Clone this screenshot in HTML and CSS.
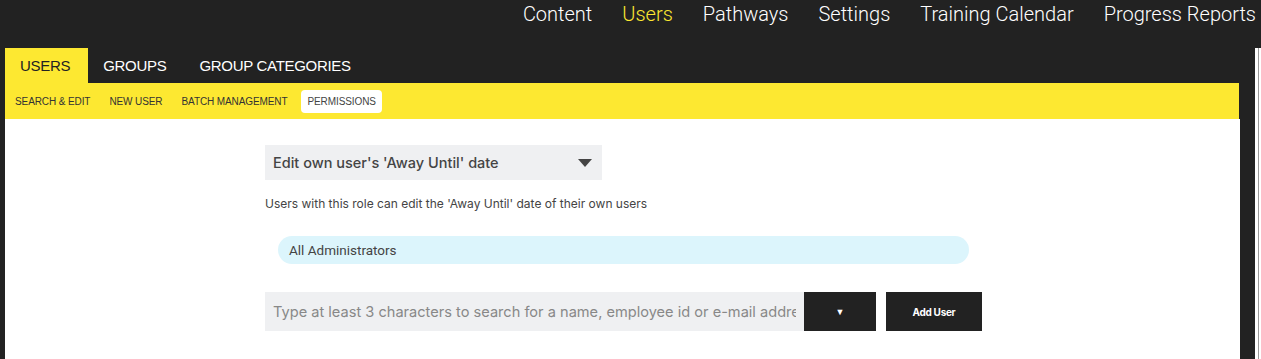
FILE: index.html
```html
<!DOCTYPE html>
<html lang="en">
  <head>
    <meta charset="UTF-8" />
    <meta name="viewport" content="width=device-width, initial-scale=1.0" />
    <title>Users - Permissions</title>
    <link rel="stylesheet" href="styles.css">
  </head>
  <body>
    <!-- Main navigation -->
    <nav class="topnav">
      <a href="#">Content</a>
      <a href="#" class="current">Users</a>
      <a href="#">Pathways</a>
      <a href="#">Settings</a>
      <a href="#">Training Calendar</a>
      <a href="#">Progress Reports</a>
    </nav>

    <div class="page">
      <div class="panel">
        <!-- Section tabs -->
        <div class="tabs">
          <a href="#" class="tab active">USERS</a>
          <a href="#" class="tab">GROUPS</a>
          <a href="#" class="tab">GROUP CATEGORIES</a>
        </div>

        <!-- Sub menu -->
        <div class="subnav">
          <a href="#">SEARCH &amp; EDIT</a>
          <a href="#">NEW USER</a>
          <a href="#">BATCH MANAGEMENT</a>
          <a href="#" class="selected">PERMISSIONS</a>
        </div>

        <div class="content">
          <div class="role-select">
            <span>Edit own user's 'Away Until' date</span>
            <span class="caret"></span>
          </div>
          <p class="role-desc">Users with this role can edit the 'Away Until' date of their own users</p>

          <div class="member">All Administrators</div>

          <div class="add-row">
            <input type="text" class="search" placeholder="Type at least 3 characters to search for a name, employee id or e-mail address" />
            <button class="drop-btn">&#9660;</button>
            <button class="add-btn">Add User</button>
          </div>
        </div>
      </div>
      <div class="side-strip"></div>
    </div>
  </body>
</html>
```

FILE: styles.css
```css
/* Base */
body {
  margin: 0;
  background-color: #222;
  font-family: "Liberation Sans", Arial, sans-serif;
  color: #444;
  height: 359px;
  overflow: hidden;
}
a {
  text-decoration: none;
}

/* Top navigation */
.topnav {
  display: flex;
  justify-content: flex-end;
  gap: 30px;
  height: 48px;
  padding-right: 5px;
}
.topnav a {
  color: #fff;
  font-family: Roboto, sans-serif;
  font-size: 20px;
  font-weight: 300;
  line-height: 28px;
}
.topnav a.current {
  color: #fde831;
}

/* Page wrapper */
.page {
  display: flex;
  padding-left: 5px;
}
.panel {
  width: 1237px;
}
.side-strip {
  margin-left: 15px;
  width: 4px;
  height: 311px;
  background: #fff;
  border-left: 2px solid #fff;
  box-shadow: inset 1px 0 0 #fff, inset 2px 0 0 #999;
}

/* Tabs */
.tabs {
  display: flex;
  height: 35px;
  margin-right: 1px;
}
.tab {
  display: flex;
  align-items: center;
  padding: 0 18px 0 15px;
  color: #fff;
  font-size: 15px;
  letter-spacing: -0.3px;
}
.tab.active {
  background: #fde831;
  color: #222;
}

/* Sub menu */
.subnav {
  display: flex;
  align-items: center;
  gap: 7px;
  height: 36px;
  padding-left: 4px;
  margin-right: 1px;
  background: #fde831;
}
.subnav a {
  color: #333;
  font-size: 10px;
  padding: 6px 6px;
  border-radius: 4px;
  letter-spacing: -0.1px;
}
.subnav a.selected {
  background: #fff;
  color: #444;
  margin-left: 1px;
}

/* Content area */
.content {
  background: #fff;
  height: 240px;
  padding: 26px 0 0 260px;
  box-sizing: border-box;
  font-family: Inter, "Liberation Sans", sans-serif;
}
.role-select {
  display: flex;
  justify-content: space-between;
  align-items: center;
  width: 337px;
  height: 35px;
  box-sizing: border-box;
  padding: 0 10px 0 8px;
  background: #eff0f2;
  font-size: 14.5px;
  font-weight: 500;
  color: #444;
}
.caret {
  width: 0;
  height: 0;
  border-left: 7px solid transparent;
  border-right: 7px solid transparent;
  border-top: 8px solid #444;
}
.role-desc {
  margin: 16px 0 0;
  font-size: 12px;
  color: #444;
}
.member {
  margin: 25px 0 0 13px;
  width: 691px;
  height: 28px;
  box-sizing: border-box;
  padding-left: 11px;
  line-height: 28px;
  border-radius: 14px;
  background: #dcf5fc;
  font-family: Roboto, sans-serif;
  font-size: 13.5px;
  color: #444;
}

/* Add user row */
.add-row {
  display: flex;
  margin-top: 28px;
  height: 39px;
}
.search {
  width: 539px;
  border: none;
  outline: none;
  background: #eff0f2;
  padding: 0 8px;
  box-sizing: border-box;
  font-family: Inter, sans-serif;
  font-size: 14.6px;
  color: #444;
}
.search::placeholder {
  color: #888;
}
.drop-btn {
  width: 72px;
  border: none;
  background: #222;
  color: #fff;
  font-size: 9px;
  cursor: pointer;
}
.add-btn {
  margin-left: 10px;
  width: 96px;
  border: none;
  background: #222;
  color: #fff;
  font-family: Inter, sans-serif;
  font-size: 10px;
  font-weight: 700;
  letter-spacing: -0.3px;
  cursor: pointer;
}
```
